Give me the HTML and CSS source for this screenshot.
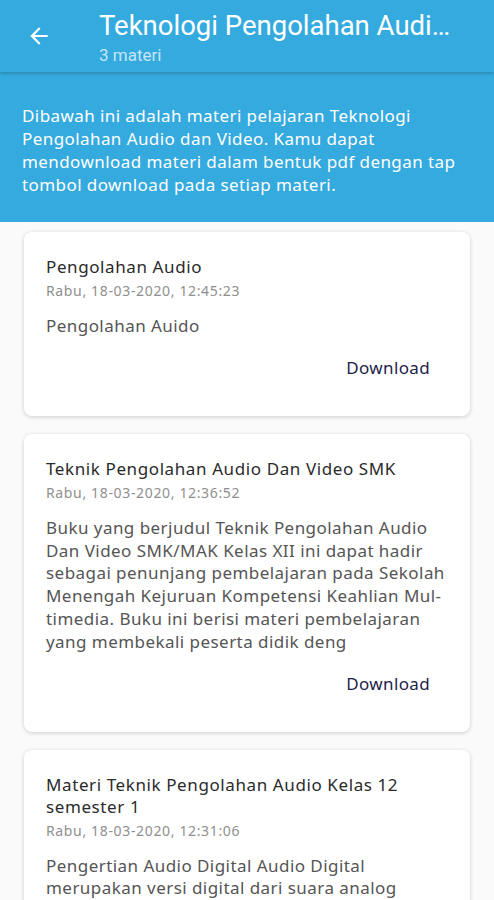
FILE: index.html
```html
<!DOCTYPE html>
<html lang="id">
<head>
<meta charset="utf-8">
<link rel="stylesheet" href="styles.css">
</head>
<body>
<header class="appbar">
  <button class="back" aria-label="Kembali">
    <svg width="26" height="26" viewBox="0 0 24 24"><path d="M20 11H7.83l5.59-5.59L12 4l-8 8 8 8 1.41-1.41L7.83 13H20v-2z" fill="#fff"/></svg>
  </button>
  <div class="titles">
    <div class="title">Teknologi Pengolahan Audio dan Video</div>
    <div class="subtitle">3 materi</div>
  </div>
</header>
<section class="intro">
  Dibawah ini adalah materi pelajaran Teknologi Pengolahan Audio dan Video. Kamu dapat mendownload materi dalam bentuk pdf dengan tap tombol download pada setiap materi.
</section>
<main class="list">
  <article class="card">
    <h2 class="card-title">Pengolahan Audio</h2>
    <div class="card-date">Rabu, 18-03-2020, 12:45:23</div>
    <p class="card-body">Pengolahan Auido</p>
    <div class="card-actions"><button class="dl">Download</button></div>
  </article>
  <article class="card">
    <h2 class="card-title">Teknik Pengolahan Audio Dan Video SMK</h2>
    <div class="card-date">Rabu, 18-03-2020, 12:36:52</div>
    <p class="card-body">Buku yang berjudul Teknik Pengolahan Audio Dan Video SMK/MAK Kelas XII ini dapat hadir sebagai penunjang pembelajaran pada Sekolah Menengah Kejuruan Kompetensi Keahlian Mul&shy;timedia. Buku ini berisi materi pembelajaran yang membekali peserta didik deng</p>
    <div class="card-actions"><button class="dl">Download</button></div>
  </article>
  <article class="card">
    <h2 class="card-title">Materi Teknik Pengolahan Audio Kelas 12 semester 1</h2>
    <div class="card-date">Rabu, 18-03-2020, 12:31:06</div>
    <p class="card-body">Pengertian Audio Digital Audio Digital merupakan versi digital dari suara analog dengan proses perekaman dan pengolahan pada komputer</p>
    <div class="card-actions"><button class="dl">Download</button></div>
  </article>
</main>
</body>
</html>
```
FILE: styles.css
```css
* { box-sizing: border-box; }
html, body { margin: 0; padding: 0; }
body {
  width: 494px;
  height: 900px;
  overflow: hidden;
  background: #fafafa;
  font-family: "Noto Sans", "Open Sans", sans-serif;
}
.appbar {
  position: relative;
  z-index: 2;
  height: 72px;
  background: #35aadf;
  display: flex;
  align-items: center;
  box-shadow: 0 2px 3px rgba(0,0,0,0.18);
}
.back {
  width: 56px;
  height: 56px;
  margin-left: 11px;
  background: none;
  border: 0;
  padding: 0;
  display: flex;
  align-items: center;
  justify-content: center;
}
.titles {
  margin-left: 32px;
  margin-top: 2px;
  min-width: 0;
  width: 356px;
  display: flex;
  flex-direction: column;
}
.title {
  font-family: Roboto, sans-serif;
  font-size: 27.5px;
  line-height: 32px;
  color: #fff;
  white-space: nowrap;
  overflow: hidden;
  text-overflow: ellipsis;
}
.subtitle {
  font-family: Roboto, sans-serif;
  font-size: 17px;
  line-height: 20px;
  color: rgba(255,255,255,0.72);
  margin-top: 3px;
}
.intro {
  background: #35aadf;
  color: #fff;
  font-size: 17px;
  letter-spacing: 0.42px;
  line-height: 23px;
  padding: 32px 24px 26px 22px;
}
.list {
  padding: 10px 24px;
  display: flex;
  flex-direction: column;
  gap: 18px;
}
.card {
  background: #fff;
  border-radius: 8px;
  box-shadow: 0 1px 4px rgba(0,0,0,0.18);
  padding: 24px 16px 8px 22px;
}
.card-title {
  margin: 0;
  font-weight: 400;
  font-size: 17px;
  letter-spacing: 0.6px;
  line-height: 22px;
  color: #2a2a2a;
}
.card-date {
  margin-top: 3px;
  font-size: 14px;
  letter-spacing: 0.65px;
  line-height: 20px;
  color: #8f8f8f;
}
.card-body {
  margin: 14px 0 0;
  font-size: 17px;
  letter-spacing: 0.45px;
  line-height: 22.8px;
  color: #555;
}
.card-actions {
  display: flex;
  justify-content: flex-end;
  margin-top: 10px;
}
.dl {
  background: none;
  border: 0;
  font-family: "Noto Sans", sans-serif;
  font-size: 17px;
  letter-spacing: 0.35px;
  line-height: 22px;
  color: #1e1e4a;
  padding: 9px 24px 9px 0;
  height: 40px;
  margin-bottom: 20px;
}
```
